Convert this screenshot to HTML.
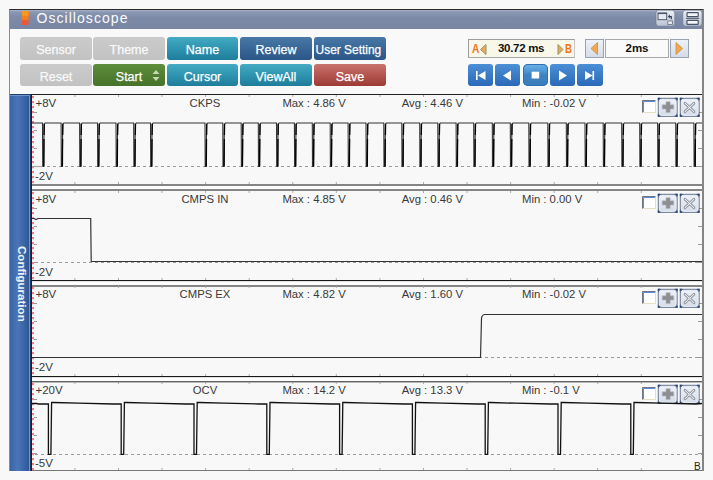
<!DOCTYPE html>
<html><head><meta charset="utf-8">
<style>
html,body{margin:0;padding:0;}
body{width:713px;height:480px;overflow:hidden;background:#f8f8f8;position:relative;font-family:"Liberation Sans", sans-serif;}
.abs{position:absolute;}
#win{position:absolute;left:9px;top:9px;width:692px;height:461px;background:#f9f9f9;border-top:1px solid #2a2a2a;border-left:1px solid #8a8a8a;border-right:2px solid #858585;}
#title{position:absolute;left:10px;top:10px;width:692px;height:19px;background:linear-gradient(#a9b3c8,#8a97b2 2px,#7d8ba9 40%,#7886a4);}
#title .t{position:absolute;left:26.5px;top:-1px;font-size:14px;line-height:18px;color:#fbfbfb;letter-spacing:1.05px;}
.btn{position:absolute;border-radius:3px;color:#fff;font-size:12.5px;font-weight:normal;-webkit-text-stroke:0.25px currentColor;line-height:26px;text-align:center;white-space:nowrap;}
.gray{background:linear-gradient(#cbcbcb,#c2c2c2);color:#fafafa;}
.teal{background:linear-gradient(#45aac2,#3097b2 45%,#1f7d9b);}
.navy{background:linear-gradient(#4a78a6,#3a6898 45%,#2a5788);}
.green{background:linear-gradient(#5e8e3c,#527f32 50%,#47722a);}
.red{background:linear-gradient(#c8746c,#b75852 45%,#9c3b35);}
.tb{position:absolute;top:64px;height:22px;width:25px;border-radius:3px;background:linear-gradient(#4b8fd6,#2b69b8);}
</style></head><body>
<div id="win"></div>
<div id="title"><div class="t">Oscilloscope</div></div>
<svg class="abs" style="left:22px;top:11px" width="6.5" height="14"><rect width="6.5" height="14" fill="#e8583a"/><path d="M0 0H6.5V8.5L5.5 9.5L4.5 8.5L3.5 9.5L2 8.5L1 9.5L0 8.5Z" fill="#f3801f"/><path d="M0 0H6.5V4.2L5.5 5.2L4.5 4.2L3.2 5.2L2.2 4.2L1 5.2L0 4.2Z" fill="#f89a22"/></svg>
<div class="btn gray" style="left:20px;top:37px;width:72px;height:23px;">Sensor</div>
<div class="btn gray" style="left:93px;top:37px;width:72px;height:23px;">Theme</div>
<div class="btn teal" style="left:167px;top:37px;width:71px;height:23px;">Name</div>
<div class="btn navy" style="left:240px;top:37px;width:72px;height:23px;">Review</div>
<div class="btn navy" style="left:314px;top:37px;width:72px;height:23px;"><span style="display:inline-block;transform:scaleX(0.955);position:relative;left:-1.5px">User Setting</span></div>
<div class="btn gray" style="left:20px;top:64px;width:72px;height:22px;">Reset</div>
<div class="btn green" style="left:93px;top:64px;width:72px;height:22px;"><span style="position:relative;left:0px">Start</span><svg class="abs" style="left:59px;top:6px" width="8" height="11"><path d="M4 0 L7.5 4 L0.5 4Z M4 11 L7.5 7 L0.5 7Z" fill="#c5dcb0"/></svg></div>
<div class="btn teal" style="left:167px;top:64px;width:71px;height:22px;">Cursor</div>
<div class="btn teal" style="left:240px;top:64px;width:72px;height:22px;">ViewAll</div>
<div class="btn red" style="left:314px;top:64px;width:72px;height:22px;">Save</div>
<div class="abs" style="left:468px;top:39px;width:105px;height:17px;background:#f9f7ea;border:1px solid #9c9c9c;border-right-color:#c8c8c8;border-bottom-color:#a8a8a8;"></div>
<div class="abs" style="left:471.5px;top:42px;font-size:12px;font-weight:bold;color:#f07414;line-height:14px;transform:scaleX(0.85);transform-origin:0 0;">A</div>
<svg class="abs" style="left:480px;top:43.5px" width="7" height="11"><path d="M6 0.5 L0.5 5.5 L6 10.5Z" fill="#f0a860" stroke="#8a9a5a" stroke-width="1"/></svg>
<div class="abs" style="left:498px;top:41px;font-size:11.5px;letter-spacing:-0.3px;font-weight:bold;color:#111;line-height:14px;">30.72 ms</div>
<svg class="abs" style="left:556.5px;top:43.5px" width="7" height="11"><path d="M1 0.5 L6 5.5 L1 10.5Z" fill="#f0a860" stroke="#8a9a5a" stroke-width="1"/></svg>
<div class="abs" style="left:564.5px;top:42px;font-size:12px;font-weight:bold;color:#f07414;line-height:14px;transform:scaleX(0.8);transform-origin:0 0;">B</div>
<div class="abs" style="left:585px;top:39px;width:17px;height:17px;background:linear-gradient(#eef2f8,#d4dce8);border:1px solid #9aa2b0;"></div>
<div class="abs" style="left:670px;top:39px;width:17px;height:17px;background:linear-gradient(#eef2f8,#d4dce8);border:1px solid #9aa2b0;"></div>
<svg class="abs" style="left:590px;top:42px" width="9" height="13"><path d="M7.5 0.5 L1 6.5 L7.5 12.5Z" fill="#f2a850" stroke="#c89040" stroke-width="0.8"/></svg>
<svg class="abs" style="left:675px;top:42px" width="9" height="13"><path d="M1 0.5 L7.5 6.5 L1 12.5Z" fill="#f2a850" stroke="#c89040" stroke-width="0.8"/></svg>
<div class="abs" style="left:605px;top:39px;width:62px;height:17px;background:#fafafa;border:1px solid #a8a8a8;font-size:11.5px;font-weight:bold;color:#111;line-height:17px;text-align:center;">2ms</div>
<div class="tb" style="left:468px;width:25px;"><svg width="25" height="22" style="position:absolute;left:0;top:0"><path d="M8 7h1.6v9H8z M17.5 7 L10 11.5 L17.5 16Z" fill="#fff"/></svg></div>
<div class="tb" style="left:495px;width:25px;"><svg width="25" height="22" style="position:absolute;left:0;top:0"><path d="M16 6.5 L8 11.5 L16 16.5Z" fill="#fff"/></svg></div>
<div class="tb" style="left:523px;width:25px;background:linear-gradient(#6cb2ea,#4c94d4 35%,#3c82c2 50%,#3b7db9);border-radius:5px;box-shadow:inset 0 0 0 1px #3070b0;"><svg width="25" height="22" style="position:absolute;left:0;top:0"><path d="M8.6 7.7h7.6v6.8H8.6z" fill="#fff"/></svg></div>
<div class="tb" style="left:550px;width:25px;"><svg width="25" height="22" style="position:absolute;left:0;top:0"><path d="M9 6.5 L17 11.5 L9 16.5Z" fill="#fff"/></svg></div>
<div class="tb" style="left:577px;width:26px;"><svg width="26" height="22" style="position:absolute;left:0;top:0"><path d="M8 7 L15.5 11.5 L8 16Z M15.5 7h1.6v9h-1.6z" fill="#fff"/></svg></div>
<svg class="abs" style="left:655px;top:9px" width="48" height="19">
<defs><linearGradient id="tg" x1="0" y1="0" x2="0" y2="1"><stop offset="0" stop-color="#eef1f6"/><stop offset="1" stop-color="#b9c2d2"/></linearGradient></defs>
<rect x="1" y="1.2" width="18.8" height="16" rx="2.8" fill="url(#tg)" stroke="#6f7a90" stroke-width="0.7"/>
<rect x="3" y="4.3" width="8.7" height="6.4" fill="#e6eaf1" stroke="#4e5870" stroke-width="1"/>
<line x1="2.6" y1="4.3" x2="12.1" y2="4.3" stroke="#4e5870" stroke-width="1.6"/>
<rect x="12.8" y="12" width="4.6" height="3.4" fill="#eef1f6" stroke="#6a7488" stroke-width="0.9"/>
<path d="M16.3 10.2 V7.6 H14" fill="none" stroke="#36405a" stroke-width="1.2"/>
<path d="M12.8 7.6 L15 5.6 L15 9.6Z" fill="#36405a"/>
<rect x="27.8" y="1.2" width="19.2" height="16" rx="2.8" fill="url(#tg)" stroke="#6f7a90" stroke-width="0.7"/>
<rect x="32" y="3.6" width="11.2" height="4" rx="0.6" fill="#f4f6fa" stroke="#4a5468" stroke-width="1.2"/>
<line x1="31" y1="9.3" x2="44.3" y2="9.3" stroke="#4a5468" stroke-width="1"/>
<rect x="32" y="11.4" width="11.2" height="4" rx="0.6" fill="#f4f6fa" stroke="#4a5468" stroke-width="1.2"/>
</svg>
<div class="abs" style="left:10px;top:94px;width:20px;height:377px;background:linear-gradient(90deg,#3a64a6,#4a76b8 40%,#3a66a8 70%,#2c5490);border-top:1px solid #1e4070;box-sizing:border-box;"></div>
<div class="abs" style="left:29px;top:95px;width:1px;height:376px;background:#7096cc;"></div>
<div class="abs" style="left:10px;top:95px;width:19px;height:1px;background:#6f94cc;"></div>
<div class="abs" style="left:30px;top:94px;width:1px;height:377px;background:#0c2644;"></div>
<div class="abs" style="left:15.5px;top:246px;width:12px;height:74px;"><div style="position:absolute;left:12px;top:0;transform-origin:0 0;transform:rotate(90deg);font-family:'Liberation Sans',sans-serif;font-weight:bold;font-size:11.55px;line-height:12px;color:#eef2f8;white-space:nowrap;">Configuration</div></div>
<svg class="abs" style="left:0;top:0" width="713" height="480">
<defs><linearGradient id="bg1" x1="0" y1="0" x2="0" y2="1"><stop offset="0" stop-color="#eef2f8"/><stop offset="1" stop-color="#d6dde9"/></linearGradient><linearGradient id="cb" x1="0" y1="0" x2="1" y2="1"><stop offset="0" stop-color="#3c6cc0"/><stop offset="1" stop-color="#e0d8b8"/></linearGradient></defs>
<rect x="30" y="185.5" width="672" height="4.0" fill="#fdfdfd"/>
<rect x="30" y="281.3" width="672" height="4.199999999999989" fill="#fdfdfd"/>
<rect x="30" y="377.3" width="672" height="4.0" fill="#fdfdfd"/>
<rect x="31" y="94" width="671" height="91" fill="#f8f8f8"/>
<line x1="31" y1="94.5" x2="702" y2="94.5" stroke="#222" stroke-width="1"/>
<line x1="31" y1="185.0" x2="702" y2="185.0" stroke="#111" stroke-width="1"/>
<rect x="32" y="96" width="2" height="2.2" fill="#ff7a7a"/>
<rect x="32" y="101" width="2" height="2.2" fill="#ff7a7a"/>
<rect x="32" y="106" width="2" height="2.2" fill="#ff7a7a"/>
<rect x="32" y="111" width="2" height="2.2" fill="#ff7a7a"/>
<rect x="32" y="116" width="2" height="2.2" fill="#ff7a7a"/>
<rect x="32" y="121" width="2" height="2.2" fill="#ff7a7a"/>
<rect x="32" y="126" width="2" height="2.2" fill="#ff7a7a"/>
<rect x="32" y="131" width="2" height="2.2" fill="#ff7a7a"/>
<rect x="32" y="136" width="2" height="2.2" fill="#ff7a7a"/>
<rect x="32" y="141" width="2" height="2.2" fill="#ff7a7a"/>
<rect x="32" y="146" width="2" height="2.2" fill="#ff7a7a"/>
<rect x="32" y="151" width="2" height="2.2" fill="#ff7a7a"/>
<rect x="32" y="156" width="2" height="2.2" fill="#ff7a7a"/>
<rect x="32" y="161" width="2" height="2.2" fill="#ff7a7a"/>
<rect x="32" y="166" width="2" height="2.2" fill="#ff7a7a"/>
<rect x="32" y="171" width="2" height="2.2" fill="#ff7a7a"/>
<rect x="32" y="176" width="2" height="2.2" fill="#ff7a7a"/>
<rect x="32" y="181" width="2" height="2.2" fill="#ff7a7a"/>
<line x1="74.9" y1="95" x2="74.9" y2="97" stroke="#aaa" stroke-width="1"/>
<line x1="74.9" y1="182" x2="74.9" y2="184" stroke="#aaa" stroke-width="1"/>
<line x1="118.5" y1="95" x2="118.5" y2="97" stroke="#aaa" stroke-width="1"/>
<line x1="118.5" y1="182" x2="118.5" y2="184" stroke="#aaa" stroke-width="1"/>
<line x1="162.0" y1="95" x2="162.0" y2="97" stroke="#aaa" stroke-width="1"/>
<line x1="162.0" y1="182" x2="162.0" y2="184" stroke="#aaa" stroke-width="1"/>
<line x1="205.6" y1="95" x2="205.6" y2="97" stroke="#aaa" stroke-width="1"/>
<line x1="205.6" y1="182" x2="205.6" y2="184" stroke="#aaa" stroke-width="1"/>
<line x1="249.2" y1="95" x2="249.2" y2="97" stroke="#aaa" stroke-width="1"/>
<line x1="249.2" y1="182" x2="249.2" y2="184" stroke="#aaa" stroke-width="1"/>
<line x1="292.8" y1="95" x2="292.8" y2="97" stroke="#aaa" stroke-width="1"/>
<line x1="292.8" y1="182" x2="292.8" y2="184" stroke="#aaa" stroke-width="1"/>
<line x1="336.3" y1="95" x2="336.3" y2="97" stroke="#aaa" stroke-width="1"/>
<line x1="336.3" y1="182" x2="336.3" y2="184" stroke="#aaa" stroke-width="1"/>
<line x1="379.9" y1="95" x2="379.9" y2="97" stroke="#aaa" stroke-width="1"/>
<line x1="379.9" y1="182" x2="379.9" y2="184" stroke="#aaa" stroke-width="1"/>
<line x1="423.5" y1="95" x2="423.5" y2="97" stroke="#aaa" stroke-width="1"/>
<line x1="423.5" y1="182" x2="423.5" y2="184" stroke="#aaa" stroke-width="1"/>
<line x1="467.0" y1="95" x2="467.0" y2="97" stroke="#aaa" stroke-width="1"/>
<line x1="467.0" y1="182" x2="467.0" y2="184" stroke="#aaa" stroke-width="1"/>
<line x1="510.6" y1="95" x2="510.6" y2="97" stroke="#aaa" stroke-width="1"/>
<line x1="510.6" y1="182" x2="510.6" y2="184" stroke="#aaa" stroke-width="1"/>
<line x1="554.2" y1="95" x2="554.2" y2="97" stroke="#aaa" stroke-width="1"/>
<line x1="554.2" y1="182" x2="554.2" y2="184" stroke="#aaa" stroke-width="1"/>
<line x1="597.7" y1="95" x2="597.7" y2="97" stroke="#aaa" stroke-width="1"/>
<line x1="597.7" y1="182" x2="597.7" y2="184" stroke="#aaa" stroke-width="1"/>
<line x1="641.3" y1="95" x2="641.3" y2="97" stroke="#aaa" stroke-width="1"/>
<line x1="641.3" y1="182" x2="641.3" y2="184" stroke="#aaa" stroke-width="1"/>
<line x1="34" y1="112.5" x2="37" y2="112.5" stroke="#999" stroke-width="1"/>
<line x1="698" y1="112.5" x2="702" y2="112.5" stroke="#999" stroke-width="1"/>
<line x1="34" y1="130.5" x2="37" y2="130.5" stroke="#999" stroke-width="1"/>
<line x1="698" y1="130.5" x2="702" y2="130.5" stroke="#999" stroke-width="1"/>
<line x1="34" y1="148.5" x2="37" y2="148.5" stroke="#999" stroke-width="1"/>
<line x1="698" y1="148.5" x2="702" y2="148.5" stroke="#999" stroke-width="1"/>
<line x1="34" y1="166.5" x2="37" y2="166.5" stroke="#999" stroke-width="1"/>
<line x1="698" y1="166.5" x2="702" y2="166.5" stroke="#999" stroke-width="1"/>
<line x1="35" y1="166.5" x2="702" y2="166.5" stroke="#9a9a9a" stroke-width="1" stroke-dasharray="3 3"/>
<text x="35.5" y="106.5" font-size="11.5" fill="#383838">+8V</text>
<text x="35" y="179.5" font-size="11.5" fill="#383838">-2V</text>
<text x="205" y="106.5" font-size="11.3" fill="#3a3a3a" text-anchor="middle">CKPS</text>
<text x="282.4" y="106.5" font-size="11.3" fill="#3a3a3a">Max : 4.86 V</text>
<text x="401.7" y="106.5" font-size="11.3" fill="#3a3a3a">Avg : 4.46 V</text>
<text x="522" y="106.5" font-size="11.3" fill="#3a3a3a">Min : -0.02 V</text>
<rect x="642.5" y="100.5" width="13" height="12" fill="#fff" stroke="#e4dec4" stroke-width="1"/>
<path d="M642.5 112.5 V100.5 H655.5" fill="none" stroke="#6e7686" stroke-width="1"/>
<path d="M643.5 112 V101.5 H655" fill="none" stroke="#5a8ad8" stroke-width="1"/>
<rect x="657.8" y="97.8" width="19.8" height="19" fill="#5a6a88"/>
<rect x="659.1999999999999" y="99.2" width="17" height="16.2" rx="2.5" fill="url(#bg1)" stroke="#f6f8fb" stroke-width="0.9"/>
<path d="M657.8 97.8 h2.4 L657.8 100.2Z" fill="#1c3c7a"/>
<path d="M677.5999999999999 97.8 h-2.4 L677.5999999999999 100.2Z" fill="#1c3c7a"/>
<path d="M657.8 116.8 h2.4 L657.8 114.39999999999999Z" fill="#1c3c7a"/>
<path d="M677.5999999999999 116.8 h-2.4 L677.5999999999999 114.39999999999999Z" fill="#1c3c7a"/>
<path d="M665.9999999999999 101.7h4.2v3.1h3.5v4.3h-3.5v3.4h-4.2v-3.4h-3.8v-4.3h3.8z" fill="#8c8e94" stroke="#b4b8c0" stroke-width="0.6"/>
<rect x="679.8" y="97.8" width="19.8" height="19" fill="#5a6a88"/>
<rect x="681.1999999999999" y="99.2" width="17" height="16.2" rx="2.5" fill="url(#bg1)" stroke="#f6f8fb" stroke-width="0.9"/>
<path d="M679.8 97.8 h2.4 L679.8 100.2Z" fill="#1c3c7a"/>
<path d="M699.5999999999999 97.8 h-2.4 L699.5999999999999 100.2Z" fill="#1c3c7a"/>
<path d="M679.8 116.8 h2.4 L679.8 114.39999999999999Z" fill="#1c3c7a"/>
<path d="M699.5999999999999 116.8 h-2.4 L699.5999999999999 114.39999999999999Z" fill="#1c3c7a"/>
<path d="M685.0 103.2 L694.0 111.8 M694.0 103.2 L685.0 111.8" stroke="#80848e" stroke-width="2.6" stroke-linecap="round"/>
<path d="M685.0 103.2 L694.0 111.8 M694.0 103.2 L685.0 111.8" stroke="#eef0f4" stroke-width="1.1" stroke-linecap="round"/>
<rect x="31" y="190" width="671" height="91" fill="#f8f8f8"/>
<line x1="31" y1="190.0" x2="702" y2="190.0" stroke="#111" stroke-width="1"/>
<line x1="31" y1="280.6" x2="702" y2="280.6" stroke="#000" stroke-width="1"/>
<rect x="32" y="192" width="2" height="2.2" fill="#ff7a7a"/>
<rect x="32" y="197" width="2" height="2.2" fill="#ff7a7a"/>
<rect x="32" y="202" width="2" height="2.2" fill="#ff7a7a"/>
<rect x="32" y="207" width="2" height="2.2" fill="#ff7a7a"/>
<rect x="32" y="212" width="2" height="2.2" fill="#ff7a7a"/>
<rect x="32" y="217" width="2" height="2.2" fill="#ff7a7a"/>
<rect x="32" y="222" width="2" height="2.2" fill="#ff7a7a"/>
<rect x="32" y="227" width="2" height="2.2" fill="#ff7a7a"/>
<rect x="32" y="232" width="2" height="2.2" fill="#ff7a7a"/>
<rect x="32" y="237" width="2" height="2.2" fill="#ff7a7a"/>
<rect x="32" y="242" width="2" height="2.2" fill="#ff7a7a"/>
<rect x="32" y="247" width="2" height="2.2" fill="#ff7a7a"/>
<rect x="32" y="252" width="2" height="2.2" fill="#ff7a7a"/>
<rect x="32" y="257" width="2" height="2.2" fill="#ff7a7a"/>
<rect x="32" y="262" width="2" height="2.2" fill="#ff7a7a"/>
<rect x="32" y="267" width="2" height="2.2" fill="#ff7a7a"/>
<rect x="32" y="272" width="2" height="2.2" fill="#ff7a7a"/>
<rect x="32" y="277" width="2" height="2.2" fill="#ff7a7a"/>
<line x1="74.9" y1="191" x2="74.9" y2="193" stroke="#aaa" stroke-width="1"/>
<line x1="74.9" y1="278" x2="74.9" y2="280" stroke="#aaa" stroke-width="1"/>
<line x1="118.5" y1="191" x2="118.5" y2="193" stroke="#aaa" stroke-width="1"/>
<line x1="118.5" y1="278" x2="118.5" y2="280" stroke="#aaa" stroke-width="1"/>
<line x1="162.0" y1="191" x2="162.0" y2="193" stroke="#aaa" stroke-width="1"/>
<line x1="162.0" y1="278" x2="162.0" y2="280" stroke="#aaa" stroke-width="1"/>
<line x1="205.6" y1="191" x2="205.6" y2="193" stroke="#aaa" stroke-width="1"/>
<line x1="205.6" y1="278" x2="205.6" y2="280" stroke="#aaa" stroke-width="1"/>
<line x1="249.2" y1="191" x2="249.2" y2="193" stroke="#aaa" stroke-width="1"/>
<line x1="249.2" y1="278" x2="249.2" y2="280" stroke="#aaa" stroke-width="1"/>
<line x1="292.8" y1="191" x2="292.8" y2="193" stroke="#aaa" stroke-width="1"/>
<line x1="292.8" y1="278" x2="292.8" y2="280" stroke="#aaa" stroke-width="1"/>
<line x1="336.3" y1="191" x2="336.3" y2="193" stroke="#aaa" stroke-width="1"/>
<line x1="336.3" y1="278" x2="336.3" y2="280" stroke="#aaa" stroke-width="1"/>
<line x1="379.9" y1="191" x2="379.9" y2="193" stroke="#aaa" stroke-width="1"/>
<line x1="379.9" y1="278" x2="379.9" y2="280" stroke="#aaa" stroke-width="1"/>
<line x1="423.5" y1="191" x2="423.5" y2="193" stroke="#aaa" stroke-width="1"/>
<line x1="423.5" y1="278" x2="423.5" y2="280" stroke="#aaa" stroke-width="1"/>
<line x1="467.0" y1="191" x2="467.0" y2="193" stroke="#aaa" stroke-width="1"/>
<line x1="467.0" y1="278" x2="467.0" y2="280" stroke="#aaa" stroke-width="1"/>
<line x1="510.6" y1="191" x2="510.6" y2="193" stroke="#aaa" stroke-width="1"/>
<line x1="510.6" y1="278" x2="510.6" y2="280" stroke="#aaa" stroke-width="1"/>
<line x1="554.2" y1="191" x2="554.2" y2="193" stroke="#aaa" stroke-width="1"/>
<line x1="554.2" y1="278" x2="554.2" y2="280" stroke="#aaa" stroke-width="1"/>
<line x1="597.7" y1="191" x2="597.7" y2="193" stroke="#aaa" stroke-width="1"/>
<line x1="597.7" y1="278" x2="597.7" y2="280" stroke="#aaa" stroke-width="1"/>
<line x1="641.3" y1="191" x2="641.3" y2="193" stroke="#aaa" stroke-width="1"/>
<line x1="641.3" y1="278" x2="641.3" y2="280" stroke="#aaa" stroke-width="1"/>
<line x1="34" y1="208.5" x2="37" y2="208.5" stroke="#999" stroke-width="1"/>
<line x1="698" y1="208.5" x2="702" y2="208.5" stroke="#999" stroke-width="1"/>
<line x1="34" y1="226.5" x2="37" y2="226.5" stroke="#999" stroke-width="1"/>
<line x1="698" y1="226.5" x2="702" y2="226.5" stroke="#999" stroke-width="1"/>
<line x1="34" y1="244.5" x2="37" y2="244.5" stroke="#999" stroke-width="1"/>
<line x1="698" y1="244.5" x2="702" y2="244.5" stroke="#999" stroke-width="1"/>
<line x1="34" y1="262.5" x2="37" y2="262.5" stroke="#999" stroke-width="1"/>
<line x1="698" y1="262.5" x2="702" y2="262.5" stroke="#999" stroke-width="1"/>
<line x1="35" y1="262.5" x2="702" y2="262.5" stroke="#9a9a9a" stroke-width="1" stroke-dasharray="3 3"/>
<text x="35.5" y="202.5" font-size="11.5" fill="#383838">+8V</text>
<text x="35" y="275.5" font-size="11.5" fill="#383838">-2V</text>
<text x="205" y="202.5" font-size="11.3" fill="#3a3a3a" text-anchor="middle">CMPS IN</text>
<text x="282.4" y="202.5" font-size="11.3" fill="#3a3a3a">Max : 4.85 V</text>
<text x="401.7" y="202.5" font-size="11.3" fill="#3a3a3a">Avg : 0.46 V</text>
<text x="522" y="202.5" font-size="11.3" fill="#3a3a3a">Min : 0.00 V</text>
<rect x="642.5" y="196.5" width="13" height="12" fill="#fff" stroke="#e4dec4" stroke-width="1"/>
<path d="M642.5 208.5 V196.5 H655.5" fill="none" stroke="#6e7686" stroke-width="1"/>
<path d="M643.5 208 V197.5 H655" fill="none" stroke="#5a8ad8" stroke-width="1"/>
<rect x="657.8" y="193.8" width="19.8" height="19" fill="#5a6a88"/>
<rect x="659.1999999999999" y="195.20000000000002" width="17" height="16.2" rx="2.5" fill="url(#bg1)" stroke="#f6f8fb" stroke-width="0.9"/>
<path d="M657.8 193.8 h2.4 L657.8 196.20000000000002Z" fill="#1c3c7a"/>
<path d="M677.5999999999999 193.8 h-2.4 L677.5999999999999 196.20000000000002Z" fill="#1c3c7a"/>
<path d="M657.8 212.8 h2.4 L657.8 210.4Z" fill="#1c3c7a"/>
<path d="M677.5999999999999 212.8 h-2.4 L677.5999999999999 210.4Z" fill="#1c3c7a"/>
<path d="M665.9999999999999 197.7h4.2v3.1h3.5v4.3h-3.5v3.4h-4.2v-3.4h-3.8v-4.3h3.8z" fill="#8c8e94" stroke="#b4b8c0" stroke-width="0.6"/>
<rect x="679.8" y="193.8" width="19.8" height="19" fill="#5a6a88"/>
<rect x="681.1999999999999" y="195.20000000000002" width="17" height="16.2" rx="2.5" fill="url(#bg1)" stroke="#f6f8fb" stroke-width="0.9"/>
<path d="M679.8 193.8 h2.4 L679.8 196.20000000000002Z" fill="#1c3c7a"/>
<path d="M699.5999999999999 193.8 h-2.4 L699.5999999999999 196.20000000000002Z" fill="#1c3c7a"/>
<path d="M679.8 212.8 h2.4 L679.8 210.4Z" fill="#1c3c7a"/>
<path d="M699.5999999999999 212.8 h-2.4 L699.5999999999999 210.4Z" fill="#1c3c7a"/>
<path d="M685.0 199.2 L694.0 207.8 M694.0 199.2 L685.0 207.8" stroke="#80848e" stroke-width="2.6" stroke-linecap="round"/>
<path d="M685.0 199.2 L694.0 207.8 M694.0 199.2 L685.0 207.8" stroke="#eef0f4" stroke-width="1.1" stroke-linecap="round"/>
<rect x="31" y="285" width="671" height="92" fill="#f8f8f8"/>
<line x1="31" y1="286.0" x2="702" y2="286.0" stroke="#111" stroke-width="1"/>
<line x1="31" y1="376.6" x2="702" y2="376.6" stroke="#000" stroke-width="1"/>
<rect x="32" y="287" width="2" height="2.2" fill="#ff7a7a"/>
<rect x="32" y="292" width="2" height="2.2" fill="#ff7a7a"/>
<rect x="32" y="297" width="2" height="2.2" fill="#ff7a7a"/>
<rect x="32" y="302" width="2" height="2.2" fill="#ff7a7a"/>
<rect x="32" y="307" width="2" height="2.2" fill="#ff7a7a"/>
<rect x="32" y="312" width="2" height="2.2" fill="#ff7a7a"/>
<rect x="32" y="317" width="2" height="2.2" fill="#ff7a7a"/>
<rect x="32" y="322" width="2" height="2.2" fill="#ff7a7a"/>
<rect x="32" y="327" width="2" height="2.2" fill="#ff7a7a"/>
<rect x="32" y="332" width="2" height="2.2" fill="#ff7a7a"/>
<rect x="32" y="337" width="2" height="2.2" fill="#ff7a7a"/>
<rect x="32" y="342" width="2" height="2.2" fill="#ff7a7a"/>
<rect x="32" y="347" width="2" height="2.2" fill="#ff7a7a"/>
<rect x="32" y="352" width="2" height="2.2" fill="#ff7a7a"/>
<rect x="32" y="357" width="2" height="2.2" fill="#ff7a7a"/>
<rect x="32" y="362" width="2" height="2.2" fill="#ff7a7a"/>
<rect x="32" y="367" width="2" height="2.2" fill="#ff7a7a"/>
<rect x="32" y="372" width="2" height="2.2" fill="#ff7a7a"/>
<line x1="74.9" y1="286" x2="74.9" y2="288" stroke="#aaa" stroke-width="1"/>
<line x1="74.9" y1="374" x2="74.9" y2="376" stroke="#aaa" stroke-width="1"/>
<line x1="118.5" y1="286" x2="118.5" y2="288" stroke="#aaa" stroke-width="1"/>
<line x1="118.5" y1="374" x2="118.5" y2="376" stroke="#aaa" stroke-width="1"/>
<line x1="162.0" y1="286" x2="162.0" y2="288" stroke="#aaa" stroke-width="1"/>
<line x1="162.0" y1="374" x2="162.0" y2="376" stroke="#aaa" stroke-width="1"/>
<line x1="205.6" y1="286" x2="205.6" y2="288" stroke="#aaa" stroke-width="1"/>
<line x1="205.6" y1="374" x2="205.6" y2="376" stroke="#aaa" stroke-width="1"/>
<line x1="249.2" y1="286" x2="249.2" y2="288" stroke="#aaa" stroke-width="1"/>
<line x1="249.2" y1="374" x2="249.2" y2="376" stroke="#aaa" stroke-width="1"/>
<line x1="292.8" y1="286" x2="292.8" y2="288" stroke="#aaa" stroke-width="1"/>
<line x1="292.8" y1="374" x2="292.8" y2="376" stroke="#aaa" stroke-width="1"/>
<line x1="336.3" y1="286" x2="336.3" y2="288" stroke="#aaa" stroke-width="1"/>
<line x1="336.3" y1="374" x2="336.3" y2="376" stroke="#aaa" stroke-width="1"/>
<line x1="379.9" y1="286" x2="379.9" y2="288" stroke="#aaa" stroke-width="1"/>
<line x1="379.9" y1="374" x2="379.9" y2="376" stroke="#aaa" stroke-width="1"/>
<line x1="423.5" y1="286" x2="423.5" y2="288" stroke="#aaa" stroke-width="1"/>
<line x1="423.5" y1="374" x2="423.5" y2="376" stroke="#aaa" stroke-width="1"/>
<line x1="467.0" y1="286" x2="467.0" y2="288" stroke="#aaa" stroke-width="1"/>
<line x1="467.0" y1="374" x2="467.0" y2="376" stroke="#aaa" stroke-width="1"/>
<line x1="510.6" y1="286" x2="510.6" y2="288" stroke="#aaa" stroke-width="1"/>
<line x1="510.6" y1="374" x2="510.6" y2="376" stroke="#aaa" stroke-width="1"/>
<line x1="554.2" y1="286" x2="554.2" y2="288" stroke="#aaa" stroke-width="1"/>
<line x1="554.2" y1="374" x2="554.2" y2="376" stroke="#aaa" stroke-width="1"/>
<line x1="597.7" y1="286" x2="597.7" y2="288" stroke="#aaa" stroke-width="1"/>
<line x1="597.7" y1="374" x2="597.7" y2="376" stroke="#aaa" stroke-width="1"/>
<line x1="641.3" y1="286" x2="641.3" y2="288" stroke="#aaa" stroke-width="1"/>
<line x1="641.3" y1="374" x2="641.3" y2="376" stroke="#aaa" stroke-width="1"/>
<line x1="34" y1="303.5" x2="37" y2="303.5" stroke="#999" stroke-width="1"/>
<line x1="698" y1="303.5" x2="702" y2="303.5" stroke="#999" stroke-width="1"/>
<line x1="34" y1="321.5" x2="37" y2="321.5" stroke="#999" stroke-width="1"/>
<line x1="698" y1="321.5" x2="702" y2="321.5" stroke="#999" stroke-width="1"/>
<line x1="34" y1="339.5" x2="37" y2="339.5" stroke="#999" stroke-width="1"/>
<line x1="698" y1="339.5" x2="702" y2="339.5" stroke="#999" stroke-width="1"/>
<line x1="34" y1="357.5" x2="37" y2="357.5" stroke="#999" stroke-width="1"/>
<line x1="698" y1="357.5" x2="702" y2="357.5" stroke="#999" stroke-width="1"/>
<line x1="35" y1="357.5" x2="702" y2="357.5" stroke="#9a9a9a" stroke-width="1" stroke-dasharray="3 3"/>
<text x="35.5" y="297.5" font-size="11.5" fill="#383838">+8V</text>
<text x="35" y="370.5" font-size="11.5" fill="#383838">-2V</text>
<text x="205" y="297.5" font-size="11.3" fill="#3a3a3a" text-anchor="middle">CMPS EX</text>
<text x="282.4" y="297.5" font-size="11.3" fill="#3a3a3a">Max : 4.82 V</text>
<text x="401.7" y="297.5" font-size="11.3" fill="#3a3a3a">Avg : 1.60 V</text>
<text x="522" y="297.5" font-size="11.3" fill="#3a3a3a">Min : -0.02 V</text>
<rect x="642.5" y="291.5" width="13" height="12" fill="#fff" stroke="#e4dec4" stroke-width="1"/>
<path d="M642.5 303.5 V291.5 H655.5" fill="none" stroke="#6e7686" stroke-width="1"/>
<path d="M643.5 303 V292.5 H655" fill="none" stroke="#5a8ad8" stroke-width="1"/>
<rect x="657.8" y="288.8" width="19.8" height="19" fill="#5a6a88"/>
<rect x="659.1999999999999" y="290.2" width="17" height="16.2" rx="2.5" fill="url(#bg1)" stroke="#f6f8fb" stroke-width="0.9"/>
<path d="M657.8 288.8 h2.4 L657.8 291.2Z" fill="#1c3c7a"/>
<path d="M677.5999999999999 288.8 h-2.4 L677.5999999999999 291.2Z" fill="#1c3c7a"/>
<path d="M657.8 307.8 h2.4 L657.8 305.40000000000003Z" fill="#1c3c7a"/>
<path d="M677.5999999999999 307.8 h-2.4 L677.5999999999999 305.40000000000003Z" fill="#1c3c7a"/>
<path d="M665.9999999999999 292.7h4.2v3.1h3.5v4.3h-3.5v3.4h-4.2v-3.4h-3.8v-4.3h3.8z" fill="#8c8e94" stroke="#b4b8c0" stroke-width="0.6"/>
<rect x="679.8" y="288.8" width="19.8" height="19" fill="#5a6a88"/>
<rect x="681.1999999999999" y="290.2" width="17" height="16.2" rx="2.5" fill="url(#bg1)" stroke="#f6f8fb" stroke-width="0.9"/>
<path d="M679.8 288.8 h2.4 L679.8 291.2Z" fill="#1c3c7a"/>
<path d="M699.5999999999999 288.8 h-2.4 L699.5999999999999 291.2Z" fill="#1c3c7a"/>
<path d="M679.8 307.8 h2.4 L679.8 305.40000000000003Z" fill="#1c3c7a"/>
<path d="M699.5999999999999 307.8 h-2.4 L699.5999999999999 305.40000000000003Z" fill="#1c3c7a"/>
<path d="M685.0 294.2 L694.0 302.8 M694.0 294.2 L685.0 302.8" stroke="#80848e" stroke-width="2.6" stroke-linecap="round"/>
<path d="M685.0 294.2 L694.0 302.8 M694.0 294.2 L685.0 302.8" stroke="#eef0f4" stroke-width="1.1" stroke-linecap="round"/>
<rect x="31" y="381" width="671" height="90" fill="#f8f8f8"/>
<line x1="31" y1="381.8" x2="702" y2="381.8" stroke="#222" stroke-width="1"/>
<line x1="31" y1="470.5" x2="702" y2="470.5" stroke="#777" stroke-width="1"/>
<rect x="32" y="383" width="2" height="2.2" fill="#ff7a7a"/>
<rect x="32" y="388" width="2" height="2.2" fill="#ff7a7a"/>
<rect x="32" y="393" width="2" height="2.2" fill="#ff7a7a"/>
<rect x="32" y="398" width="2" height="2.2" fill="#ff7a7a"/>
<rect x="32" y="403" width="2" height="2.2" fill="#ff7a7a"/>
<rect x="32" y="408" width="2" height="2.2" fill="#ff7a7a"/>
<rect x="32" y="413" width="2" height="2.2" fill="#ff7a7a"/>
<rect x="32" y="418" width="2" height="2.2" fill="#ff7a7a"/>
<rect x="32" y="423" width="2" height="2.2" fill="#ff7a7a"/>
<rect x="32" y="428" width="2" height="2.2" fill="#ff7a7a"/>
<rect x="32" y="433" width="2" height="2.2" fill="#ff7a7a"/>
<rect x="32" y="438" width="2" height="2.2" fill="#ff7a7a"/>
<rect x="32" y="443" width="2" height="2.2" fill="#ff7a7a"/>
<rect x="32" y="448" width="2" height="2.2" fill="#ff7a7a"/>
<rect x="32" y="453" width="2" height="2.2" fill="#ff7a7a"/>
<rect x="32" y="458" width="2" height="2.2" fill="#ff7a7a"/>
<rect x="32" y="463" width="2" height="2.2" fill="#ff7a7a"/>
<rect x="32" y="468" width="2" height="2.2" fill="#ff7a7a"/>
<line x1="74.9" y1="382" x2="74.9" y2="384" stroke="#aaa" stroke-width="1"/>
<line x1="74.9" y1="468" x2="74.9" y2="470" stroke="#aaa" stroke-width="1"/>
<line x1="118.5" y1="382" x2="118.5" y2="384" stroke="#aaa" stroke-width="1"/>
<line x1="118.5" y1="468" x2="118.5" y2="470" stroke="#aaa" stroke-width="1"/>
<line x1="162.0" y1="382" x2="162.0" y2="384" stroke="#aaa" stroke-width="1"/>
<line x1="162.0" y1="468" x2="162.0" y2="470" stroke="#aaa" stroke-width="1"/>
<line x1="205.6" y1="382" x2="205.6" y2="384" stroke="#aaa" stroke-width="1"/>
<line x1="205.6" y1="468" x2="205.6" y2="470" stroke="#aaa" stroke-width="1"/>
<line x1="249.2" y1="382" x2="249.2" y2="384" stroke="#aaa" stroke-width="1"/>
<line x1="249.2" y1="468" x2="249.2" y2="470" stroke="#aaa" stroke-width="1"/>
<line x1="292.8" y1="382" x2="292.8" y2="384" stroke="#aaa" stroke-width="1"/>
<line x1="292.8" y1="468" x2="292.8" y2="470" stroke="#aaa" stroke-width="1"/>
<line x1="336.3" y1="382" x2="336.3" y2="384" stroke="#aaa" stroke-width="1"/>
<line x1="336.3" y1="468" x2="336.3" y2="470" stroke="#aaa" stroke-width="1"/>
<line x1="379.9" y1="382" x2="379.9" y2="384" stroke="#aaa" stroke-width="1"/>
<line x1="379.9" y1="468" x2="379.9" y2="470" stroke="#aaa" stroke-width="1"/>
<line x1="423.5" y1="382" x2="423.5" y2="384" stroke="#aaa" stroke-width="1"/>
<line x1="423.5" y1="468" x2="423.5" y2="470" stroke="#aaa" stroke-width="1"/>
<line x1="467.0" y1="382" x2="467.0" y2="384" stroke="#aaa" stroke-width="1"/>
<line x1="467.0" y1="468" x2="467.0" y2="470" stroke="#aaa" stroke-width="1"/>
<line x1="510.6" y1="382" x2="510.6" y2="384" stroke="#aaa" stroke-width="1"/>
<line x1="510.6" y1="468" x2="510.6" y2="470" stroke="#aaa" stroke-width="1"/>
<line x1="554.2" y1="382" x2="554.2" y2="384" stroke="#aaa" stroke-width="1"/>
<line x1="554.2" y1="468" x2="554.2" y2="470" stroke="#aaa" stroke-width="1"/>
<line x1="597.7" y1="382" x2="597.7" y2="384" stroke="#aaa" stroke-width="1"/>
<line x1="597.7" y1="468" x2="597.7" y2="470" stroke="#aaa" stroke-width="1"/>
<line x1="641.3" y1="382" x2="641.3" y2="384" stroke="#aaa" stroke-width="1"/>
<line x1="641.3" y1="468" x2="641.3" y2="470" stroke="#aaa" stroke-width="1"/>
<line x1="34" y1="399.5" x2="37" y2="399.5" stroke="#999" stroke-width="1"/>
<line x1="698" y1="399.5" x2="702" y2="399.5" stroke="#999" stroke-width="1"/>
<line x1="34" y1="417.5" x2="37" y2="417.5" stroke="#999" stroke-width="1"/>
<line x1="698" y1="417.5" x2="702" y2="417.5" stroke="#999" stroke-width="1"/>
<line x1="34" y1="435.5" x2="37" y2="435.5" stroke="#999" stroke-width="1"/>
<line x1="698" y1="435.5" x2="702" y2="435.5" stroke="#999" stroke-width="1"/>
<line x1="34" y1="453.5" x2="37" y2="453.5" stroke="#999" stroke-width="1"/>
<line x1="698" y1="453.5" x2="702" y2="453.5" stroke="#999" stroke-width="1"/>
<line x1="35" y1="454.5" x2="702" y2="454.5" stroke="#9a9a9a" stroke-width="1" stroke-dasharray="3 3"/>
<text x="35.5" y="393.5" font-size="11.5" fill="#383838">+20V</text>
<text x="35" y="466.5" font-size="11.5" fill="#383838">-5V</text>
<text x="205" y="393.5" font-size="11.3" fill="#3a3a3a" text-anchor="middle">OCV</text>
<text x="282.4" y="393.5" font-size="11.3" fill="#3a3a3a">Max : 14.2 V</text>
<text x="401.7" y="393.5" font-size="11.3" fill="#3a3a3a">Avg : 13.3 V</text>
<text x="522" y="393.5" font-size="11.3" fill="#3a3a3a">Min : -0.1 V</text>
<rect x="642.5" y="387.5" width="13" height="12" fill="#fff" stroke="#e4dec4" stroke-width="1"/>
<path d="M642.5 399.5 V387.5 H655.5" fill="none" stroke="#6e7686" stroke-width="1"/>
<path d="M643.5 399 V388.5 H655" fill="none" stroke="#5a8ad8" stroke-width="1"/>
<rect x="657.8" y="384.8" width="19.8" height="19" fill="#5a6a88"/>
<rect x="659.1999999999999" y="386.2" width="17" height="16.2" rx="2.5" fill="url(#bg1)" stroke="#f6f8fb" stroke-width="0.9"/>
<path d="M657.8 384.8 h2.4 L657.8 387.2Z" fill="#1c3c7a"/>
<path d="M677.5999999999999 384.8 h-2.4 L677.5999999999999 387.2Z" fill="#1c3c7a"/>
<path d="M657.8 403.8 h2.4 L657.8 401.40000000000003Z" fill="#1c3c7a"/>
<path d="M677.5999999999999 403.8 h-2.4 L677.5999999999999 401.40000000000003Z" fill="#1c3c7a"/>
<path d="M665.9999999999999 388.7h4.2v3.1h3.5v4.3h-3.5v3.4h-4.2v-3.4h-3.8v-4.3h3.8z" fill="#8c8e94" stroke="#b4b8c0" stroke-width="0.6"/>
<rect x="679.8" y="384.8" width="19.8" height="19" fill="#5a6a88"/>
<rect x="681.1999999999999" y="386.2" width="17" height="16.2" rx="2.5" fill="url(#bg1)" stroke="#f6f8fb" stroke-width="0.9"/>
<path d="M679.8 384.8 h2.4 L679.8 387.2Z" fill="#1c3c7a"/>
<path d="M699.5999999999999 384.8 h-2.4 L699.5999999999999 387.2Z" fill="#1c3c7a"/>
<path d="M679.8 403.8 h2.4 L679.8 401.40000000000003Z" fill="#1c3c7a"/>
<path d="M699.5999999999999 403.8 h-2.4 L699.5999999999999 401.40000000000003Z" fill="#1c3c7a"/>
<path d="M685.0 390.2 L694.0 398.8 M694.0 390.2 L685.0 398.8" stroke="#80848e" stroke-width="2.6" stroke-linecap="round"/>
<path d="M685.0 390.2 L694.0 398.8 M694.0 390.2 L685.0 398.8" stroke="#eef0f4" stroke-width="1.1" stroke-linecap="round"/>
<path d="M31 123 L42.5 123 L42.7 166.5 L43.7 166.5 L44.1 124 L45.1 123 L61.1 123 L61.3 166.5 L62.3 166.5 L62.7 124 L63.7 123 L79.6 123 L79.8 166.5 L80.8 166.5 L81.2 124 L82.2 123 L97.5 123 L97.7 166.5 L98.7 166.5 L99.1 124 L100.1 123 L116.0 123 L116.2 166.5 L117.2 166.5 L117.6 124 L118.6 123 L133.7 123 L133.9 166.5 L134.9 166.5 L135.3 124 L136.3 123 L150.5 123 L150.7 166.5 L151.7 166.5 L152.1 124 L153.1 123 L205.0 123 L205.2 166.5 L206.2 166.5 L206.6 124 L207.6 123 L222.8 123 L223.0 166.5 L224.0 166.5 L224.4 124 L225.4 123 L241.2 123 L241.4 166.5 L242.4 166.5 L242.8 124 L243.8 123 L258.3 123 L258.5 166.5 L259.5 166.5 L259.9 124 L260.9 123 L276.5 123 L276.7 166.5 L277.7 166.5 L278.1 124 L279.1 123 L294.4 123 L294.6 166.5 L295.6 166.5 L296.0 124 L297.0 123 L312.3 123 L312.5 166.5 L313.5 166.5 L313.9 124 L314.9 123 L330.2 123 L330.4 166.5 L331.4 166.5 L331.8 124 L332.8 123 L348.1 123 L348.3 166.5 L349.3 166.5 L349.7 124 L350.7 123 L366.0 123 L366.2 166.5 L367.2 166.5 L367.6 124 L368.6 123 L383.8 123 L384.0 166.5 L385.0 166.5 L385.4 124 L386.4 123 L401.8 123 L402.0 166.5 L403.0 166.5 L403.4 124 L404.4 123 L419.7 123 L419.9 166.5 L420.9 166.5 L421.3 124 L422.3 123 L437.8 123 L438.0 166.5 L439.0 166.5 L439.4 124 L440.4 123 L456.1 123 L456.3 166.5 L457.3 166.5 L457.7 124 L458.7 123 L473.7 123 L473.9 166.5 L474.9 166.5 L475.3 124 L476.3 123 L492.3 123 L492.5 166.5 L493.5 166.5 L493.9 124 L494.9 123 L510.3 123 L510.5 166.5 L511.5 166.5 L511.9 124 L512.9 123 L528.8 123 L529.0 166.5 L530.0 166.5 L530.4 124 L531.4 123 L547.8 123 L548.0 166.5 L549.0 166.5 L549.4 124 L550.4 123 L566.3 123 L566.5 166.5 L567.5 166.5 L567.9 124 L568.9 123 L585.0 123 L585.2 166.5 L586.2 166.5 L586.6 124 L587.6 123 L603.2 123 L603.4 166.5 L604.4 166.5 L604.8 124 L605.8 123 L621.7 123 L621.9 166.5 L622.9 166.5 L623.3 124 L624.3 123 L639.7 123 L639.9 166.5 L640.9 166.5 L641.3 124 L642.3 123 L657.6 123 L657.8 166.5 L658.8 166.5 L659.2 124 L660.2 123 L675.7 123 L675.9 166.5 L676.9 166.5 L677.3 124 L678.3 123 L693.9 123 L694.1 166.5 L695.1 166.5 L695.5 124 L696.5 123 L702 123" fill="none" stroke="#333" stroke-width="1.1" stroke-linejoin="miter"/>
<path d="M43.8 166.5 L44.0 139 M44.1 135 L44.3 124" stroke="#000" stroke-width="1.3"/>
<path d="M62.4 166.5 L62.6 139 M62.7 135 L62.9 124" stroke="#000" stroke-width="1.3"/>
<path d="M80.9 166.5 L81.1 139 M81.2 135 L81.4 124" stroke="#000" stroke-width="1.3"/>
<path d="M98.8 166.5 L99.0 139 M99.1 135 L99.3 124" stroke="#000" stroke-width="1.3"/>
<path d="M117.3 166.5 L117.5 139 M117.6 135 L117.8 124" stroke="#000" stroke-width="1.3"/>
<path d="M135.0 166.5 L135.2 139 M135.3 135 L135.5 124" stroke="#000" stroke-width="1.3"/>
<path d="M151.8 166.5 L152.0 139 M152.1 135 L152.3 124" stroke="#000" stroke-width="1.3"/>
<path d="M206.3 166.5 L206.5 139 M206.6 135 L206.8 124" stroke="#000" stroke-width="1.3"/>
<path d="M224.1 166.5 L224.3 139 M224.4 135 L224.6 124" stroke="#000" stroke-width="1.3"/>
<path d="M242.5 166.5 L242.7 139 M242.8 135 L243.0 124" stroke="#000" stroke-width="1.3"/>
<path d="M259.6 166.5 L259.8 139 M259.9 135 L260.1 124" stroke="#000" stroke-width="1.3"/>
<path d="M277.8 166.5 L278.0 139 M278.1 135 L278.3 124" stroke="#000" stroke-width="1.3"/>
<path d="M295.7 166.5 L295.9 139 M296.0 135 L296.2 124" stroke="#000" stroke-width="1.3"/>
<path d="M313.6 166.5 L313.8 139 M313.9 135 L314.1 124" stroke="#000" stroke-width="1.3"/>
<path d="M331.5 166.5 L331.7 139 M331.8 135 L332.0 124" stroke="#000" stroke-width="1.3"/>
<path d="M349.4 166.5 L349.6 139 M349.7 135 L349.9 124" stroke="#000" stroke-width="1.3"/>
<path d="M367.3 166.5 L367.5 139 M367.6 135 L367.8 124" stroke="#000" stroke-width="1.3"/>
<path d="M385.1 166.5 L385.3 139 M385.4 135 L385.6 124" stroke="#000" stroke-width="1.3"/>
<path d="M403.1 166.5 L403.3 139 M403.4 135 L403.6 124" stroke="#000" stroke-width="1.3"/>
<path d="M421.0 166.5 L421.2 139 M421.3 135 L421.5 124" stroke="#000" stroke-width="1.3"/>
<path d="M439.1 166.5 L439.3 139 M439.4 135 L439.6 124" stroke="#000" stroke-width="1.3"/>
<path d="M457.4 166.5 L457.6 139 M457.7 135 L457.9 124" stroke="#000" stroke-width="1.3"/>
<path d="M475.0 166.5 L475.2 139 M475.3 135 L475.5 124" stroke="#000" stroke-width="1.3"/>
<path d="M493.6 166.5 L493.8 139 M493.9 135 L494.1 124" stroke="#000" stroke-width="1.3"/>
<path d="M511.6 166.5 L511.8 139 M511.9 135 L512.1 124" stroke="#000" stroke-width="1.3"/>
<path d="M530.1 166.5 L530.3 139 M530.4 135 L530.6 124" stroke="#000" stroke-width="1.3"/>
<path d="M549.1 166.5 L549.3 139 M549.4 135 L549.6 124" stroke="#000" stroke-width="1.3"/>
<path d="M567.6 166.5 L567.8 139 M567.9 135 L568.1 124" stroke="#000" stroke-width="1.3"/>
<path d="M586.3 166.5 L586.5 139 M586.6 135 L586.8 124" stroke="#000" stroke-width="1.3"/>
<path d="M604.5 166.5 L604.7 139 M604.8 135 L605.0 124" stroke="#000" stroke-width="1.3"/>
<path d="M623.0 166.5 L623.2 139 M623.3 135 L623.5 124" stroke="#000" stroke-width="1.3"/>
<path d="M641.0 166.5 L641.2 139 M641.3 135 L641.5 124" stroke="#000" stroke-width="1.3"/>
<path d="M658.9 166.5 L659.1 139 M659.2 135 L659.4 124" stroke="#000" stroke-width="1.3"/>
<path d="M677.0 166.5 L677.2 139 M677.3 135 L677.5 124" stroke="#000" stroke-width="1.3"/>
<path d="M695.2 166.5 L695.4 139 M695.5 135 L695.7 124" stroke="#000" stroke-width="1.3"/>
<line x1="32" y1="166.5" x2="42.5" y2="166.5" stroke="#aaa" stroke-width="1.2"/>
<path d="M31 218.5 L34 218.5 L36 219.5 L38 218.5 L90.7 218.5 L91.2 261.5 L702 261.5" fill="none" stroke="#333" stroke-width="1.2" stroke-linejoin="miter"/>
<path d="M31 357.5 L480.5 357.5 L481.5 318.5 Q482 314.5 485 314.5 L702 314.5" fill="none" stroke="#333" stroke-width="1.2" stroke-linejoin="miter"/>
<path d="M31 403.5 L37 403.5 L38 404 L48.4 404 L48.4 454.3 L50.9 454.3 L51.6 402.5 L53.4 402.5 L78.4 403.2 L113.2 404 L121.2 404 L121.2 454.3 L123.7 454.3 L124.4 402.5 L126.2 402.5 L151.2 403.2 L186.0 404 L194.0 404 L194.0 454.3 L196.5 454.3 L197.2 402.5 L199.0 402.5 L224.0 403.2 L258.8 404 L266.8 404 L266.8 454.3 L269.3 454.3 L270.0 402.5 L271.8 402.5 L296.8 403.2 L331.6 404 L339.6 404 L339.6 454.3 L342.1 454.3 L342.8 402.5 L344.6 402.5 L369.6 403.2 L404.4 404 L412.4 404 L412.4 454.3 L414.9 454.3 L415.6 402.5 L417.4 402.5 L442.4 403.2 L477.2 404 L485.2 404 L485.2 454.3 L487.7 454.3 L488.4 402.5 L490.2 402.5 L515.2 403.2 L550.0 404 L558.0 404 L558.0 454.3 L560.5 454.3 L561.2 402.5 L563.0 402.5 L588.0 403.2 L622.8 404 L630.8 404 L630.8 454.3 L633.3 454.3 L634.0 402.5 L635.8 402.5 L660.8 403.2 L695.6 404 L702 403.5" fill="none" stroke="#111" stroke-width="1.3" stroke-linejoin="miter"/>
<text x="694" y="470" font-size="10" fill="#222">B</text>
<rect x="30" y="94" width="1" height="377" fill="#1e3a60"/><rect x="31" y="94" width="1" height="377" fill="#0c2040"/>
</svg></body></html>
